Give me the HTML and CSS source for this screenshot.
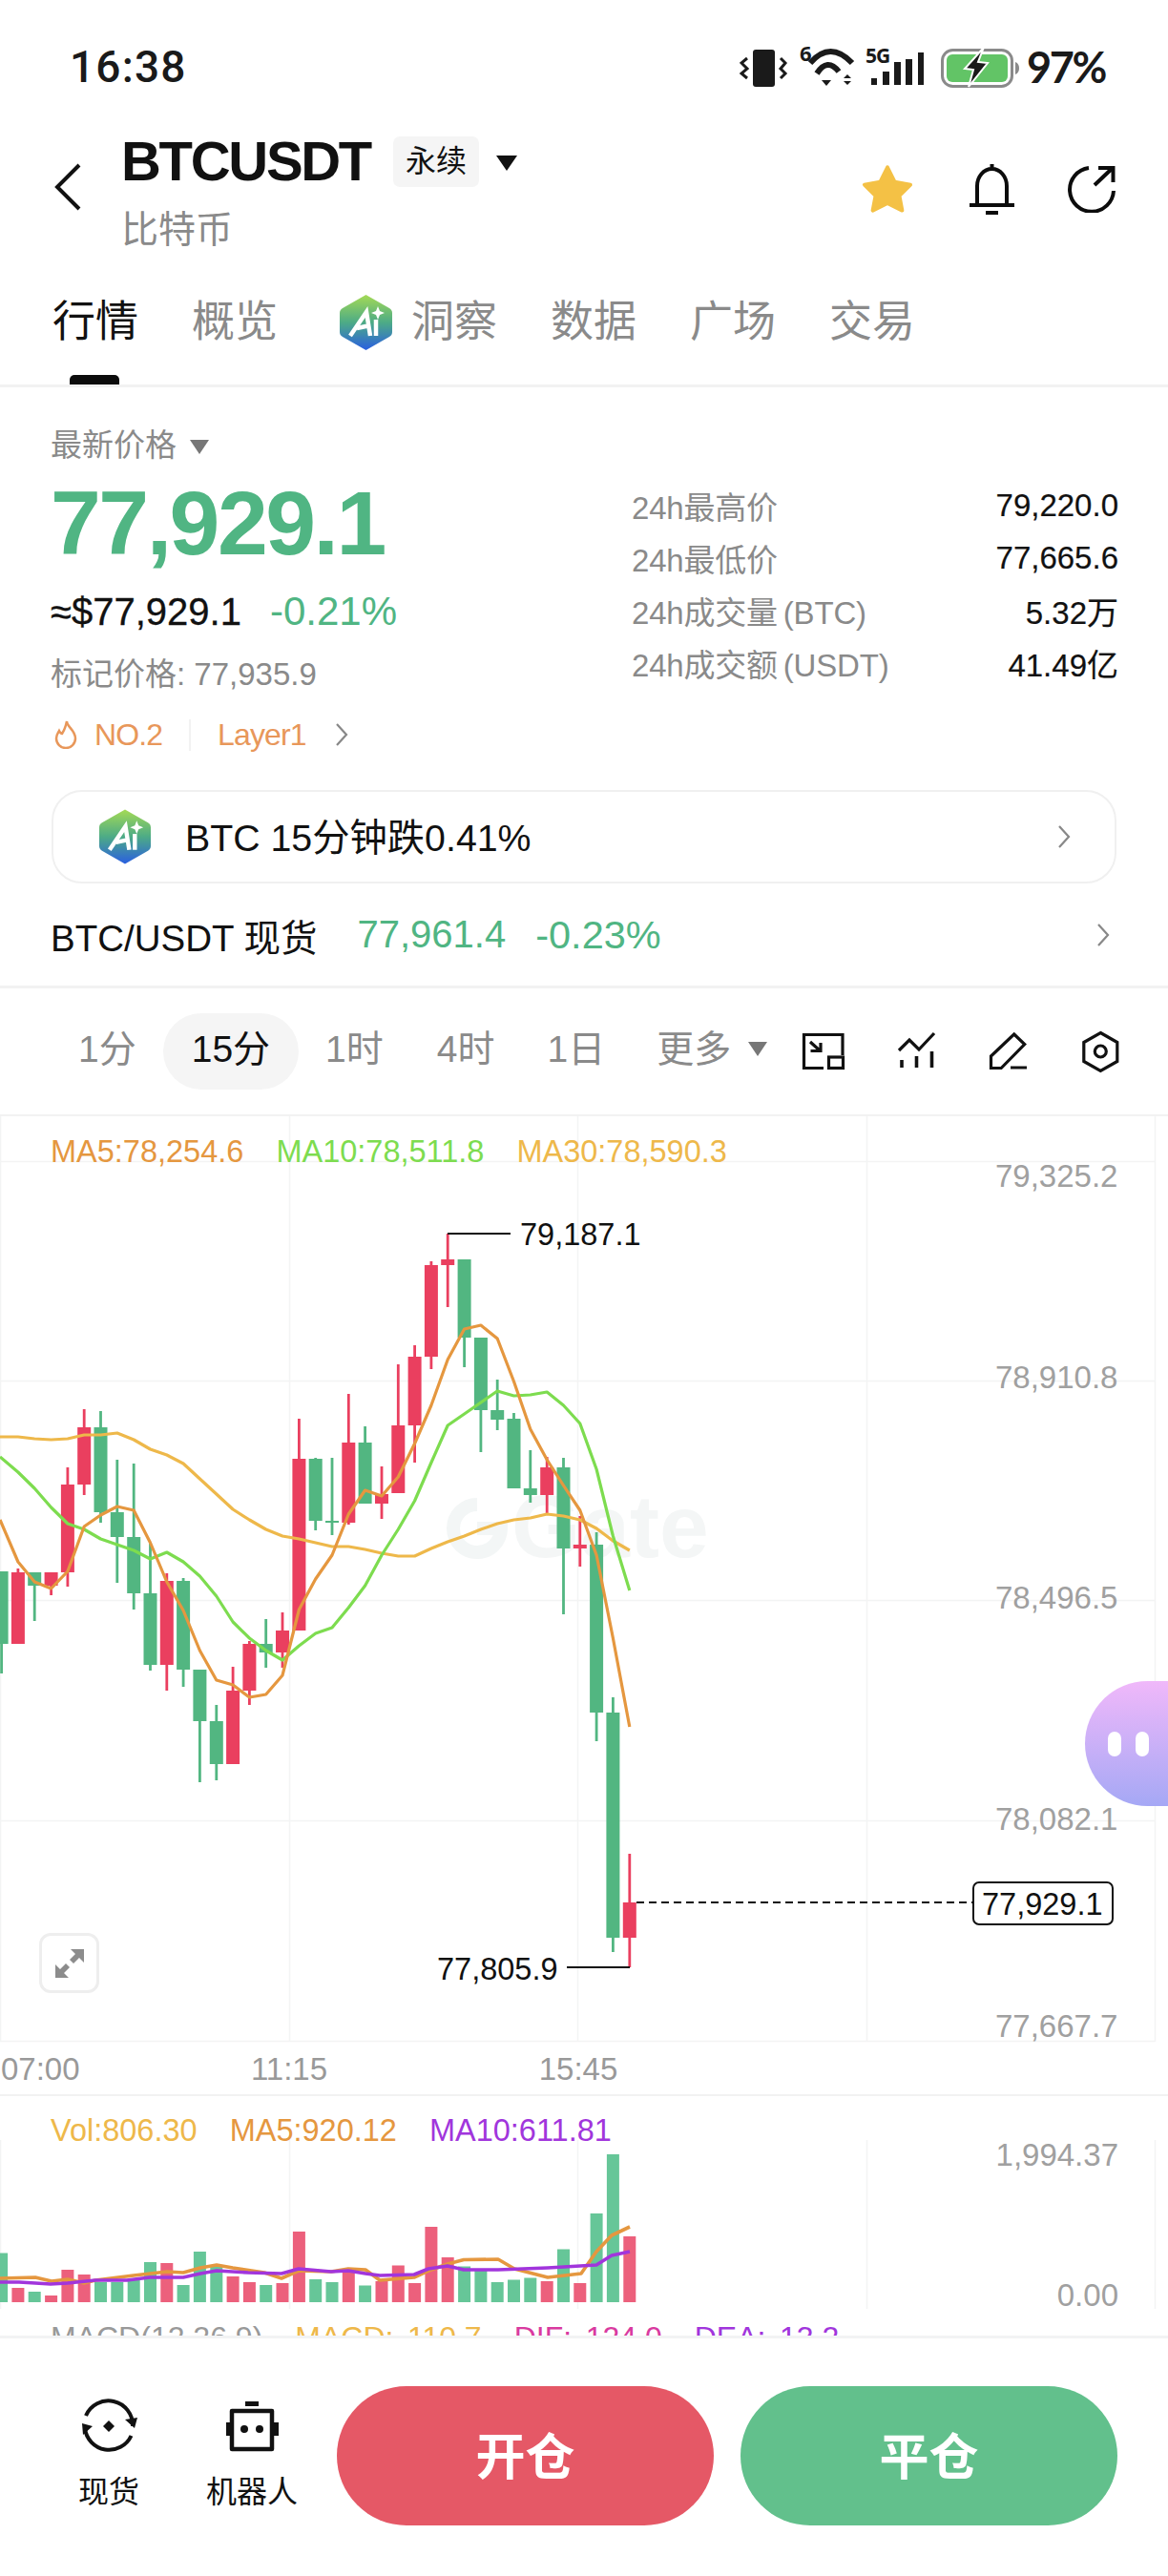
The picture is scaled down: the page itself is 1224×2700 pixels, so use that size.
FILE: index.html
```html
<!DOCTYPE html>
<html lang="zh-CN">
<head>
<meta charset="utf-8">
<title>BTCUSDT</title>
<link rel="stylesheet" href="styles.css">
</head>
<body>
<div class="page">
  <div class="status">
    <span class="clock">16:38</span>
    <div class="status-right">
      <svg class="status-icons" width="296" height="80" viewBox="774 30 296 80">
        <rect x="788" y="52" width="23" height="39" rx="3" fill="#1a1a1a"/>
        <path d="M782 61l-6 5 6 6-6 5 6 5M817 61l5 5-5 6 5 5-5 5" fill="none" stroke="#1a1a1a" stroke-width="3"/>
        <text x="837" y="64" class="st-mini">6</text>
        <path d="M848 66Q869 42 892 66" fill="none" stroke="#1a1a1a" stroke-width="6"/>
        <path d="M855 77Q866 60 878 75" fill="none" stroke="#1a1a1a" stroke-width="6"/>
        <path d="M860 84h10l-5 6z" fill="#1a1a1a"/>
        <path d="M883 82l4-4 4 4zM883 85l4 4 4-4z" fill="#1a1a1a"/>
        <text x="906" y="66" class="st-mini st-5g">5G</text>
        <path d="M912 82h6v7h-6zM924 75h7v14h-7zM936 65h7v24h-7zM948 62h7v27h-7zM961 55h6v34h-6z" fill="#1a1a1a"/>
        <rect x="986.500" y="52.500" width="73" height="38" rx="11" fill="none" stroke="#8a8a8a" stroke-width="3"/>
        <rect x="991" y="57" width="64" height="29" rx="6" fill="#62c466"/>
        <path d="M1063 65c3 1 4 4 4 6.500s-1 5.500-4 6.500z" fill="#8a8a8a"/>
        <path d="M1028 52l-18 20 9 1-5 18 20-25-10-1 5-13z" fill="#1a1a1a" stroke="#fff" stroke-width="2"/>
      </svg>
      <span class="battery-pct">97%</span>
    </div>
  </div>

  <header class="header">
    <svg class="back" width="30" height="52" viewBox="0 0 30 52"><path d="M26 3L3 26l23 23" fill="none" stroke="#111" stroke-width="4"/></svg>
    <div class="title-block">
      <div class="title-row">
        <h1 class="symbol">BTCUSDT</h1>
        <span class="badge">永续</span>
        <span class="tri tri-black"></span>
      </div>
      <div class="subtitle">比特币</div>
    </div>
    <div class="header-actions">
      <svg width="56" height="54" viewBox="901 169 58 55"><path d="M930 173l8 16 17 3-12 12 3 16-16-8-16 8 3-16-12-12 17-3z" fill="#f4c145" stroke="#f4c145" stroke-width="4" stroke-linejoin="round"/></svg>
      <svg class="bell" width="50" height="56" viewBox="1012 168 50 56"><path d="M1036.500 169v5M1021 212v-20a15.500 18 0 0 1 31 0v20M1013 212h47" fill="none" stroke="#0c0c0c" stroke-width="4"/><rect x="1030" y="218" width="13" height="4" fill="#0c0c0c"/></svg>
      <svg class="share" width="50" height="50" viewBox="1119 173 50 50"><path d="M1141 176a23 23 0 1 0 26 24" fill="none" stroke="#0c0c0c" stroke-width="4"/><path d="M1147 194l19-18M1151 176h15.500v15" fill="none" stroke="#0c0c0c" stroke-width="4"/></svg>
    </div>
  </header>

  <nav class="tabs">
    <span class="tab active">行情</span>
    <span class="tab">概览</span>
    <span class="tab tab-ai">
      <svg width="55" height="60" viewBox="0 0 55 60"><defs><linearGradient id="aiA" x1="0" y1="0" x2="0" y2="1"><stop offset="0" stop-color="#a4da55"/><stop offset=".5" stop-color="#4dab86"/><stop offset="1" stop-color="#2a5fe0"/></linearGradient></defs><path d="M27.500 1L52 15c2 1 3 3 3 5v20c0 2-1 4-3 5L27.500 59 3 45c-2-1-3-3-3-5V20c0-2 1-4 3-5z" fill="url(#aiA)"/><path d="M11 44l17-25 4 25M18 36l14-3" fill="none" stroke="#fff" stroke-width="4.500"/><path d="M38 27v17" stroke="#fff" stroke-width="4.500"/><path d="M40 13l2 5 5 2-5 2-2 5-2-5-5-2 5-2z" fill="#fff"/></svg>
      <span>洞察</span>
    </span>
    <span class="tab">数据</span>
    <span class="tab">广场</span>
    <span class="tab">交易</span>
  </nav>

  <section class="summary">
    <div class="summary-left">
      <div class="latest-label">最新价格<span class="tri tri-grey"></span></div>
      <div class="big-price">77,929.1</div>
      <div class="fiat-row"><span class="fiat">≈$77,929.1</span><span class="pct-main">-0.21%</span></div>
      <div class="mark">标记价格: 77,935.9</div>
      <div class="tags">
        <svg width="24" height="30" viewBox="0 0 24 30"><path d="M13 1c0 6 9 9 9 18a10 10 0 0 1-20 0c0-4 2-6 3-8 1 2 2 3 3 3 2-3 4-8 5-13z" fill="none" stroke="#e8975a" stroke-width="2.500"/></svg>
        <span class="tag-text tag-first">NO.2</span>
        <span class="tag-sep"></span>
        <span class="tag-text">Layer1</span>
        <svg class="tag-chev" width="14" height="26" viewBox="0 0 14 26"><path d="M2 2l10 11L2 24" fill="none" stroke="#888" stroke-width="2.200"/></svg>
      </div>
    </div>
    <dl class="stats">
      <div class="stat"><dt>24h最高价</dt><dd>79,220.0</dd></div>
      <div class="stat"><dt>24h最低价</dt><dd>77,665.6</dd></div>
      <div class="stat"><dt>24h成交量 (BTC)</dt><dd>5.32万</dd></div>
      <div class="stat"><dt>24h成交额 (USDT)</dt><dd>41.49亿</dd></div>
    </dl>
  </section>

  <div class="ai-card">
    <svg width="54" height="60" viewBox="0 0 55 60"><defs><linearGradient id="aiB" x1="0" y1="0" x2="0" y2="1"><stop offset="0" stop-color="#a4da55"/><stop offset=".5" stop-color="#4dab86"/><stop offset="1" stop-color="#2a5fe0"/></linearGradient></defs><path d="M27.500 1L52 15c2 1 3 3 3 5v20c0 2-1 4-3 5L27.500 59 3 45c-2-1-3-3-3-5V20c0-2 1-4 3-5z" fill="url(#aiB)"/><path d="M11 44l17-25 4 25M18 36l14-3" fill="none" stroke="#fff" stroke-width="4.500"/><path d="M38 27v17" stroke="#fff" stroke-width="4.500"/><path d="M40 13l2 5 5 2-5 2-2 5-2-5-5-2 5-2z" fill="#fff"/></svg>
    <span class="ai-text">BTC 15分钟跌0.41%</span>
    <svg class="chev-end" width="14" height="26" viewBox="0 0 14 26"><path d="M2 2l10 11L2 24" fill="none" stroke="#888" stroke-width="2.200"/></svg>
  </div>

  <div class="spot-row">
    <span class="spot-name">BTC/USDT 现货</span>
    <span class="spot-price">77,961.4</span>
    <span class="spot-pct">-0.23%</span>
    <svg class="chev-end" width="14" height="26" viewBox="0 0 14 26"><path d="M2 2l10 11L2 24" fill="none" stroke="#888" stroke-width="2.200"/></svg>
  </div>

  <div class="timeframes">
    <span class="tf">1分</span>
    <span class="tf tf-active">15分</span>
    <span class="tf">1时</span>
    <span class="tf">4时</span>
    <span class="tf tf-day">1日</span>
    <span class="tf tf-more">更多<span class="tri tri-grey tri-more"></span></span>
    <div class="tools">
      <svg width="48" height="44" viewBox="840 1080 48 44"><path d="M864 1119.500h-20.500V1084.500H884V1106M850 1092l10 9M850.500 1101.500H861V1093" fill="none" stroke="#111" stroke-width="3.200"/><rect x="869.500" y="1108" width="15" height="11.500" fill="none" stroke="#111" stroke-width="3.200"/></svg>
      <svg width="44" height="44" viewBox="938 1080 44 44"><path d="M941 1101l11-11 10 10 16-17" fill="none" stroke="#111" stroke-width="3.200"/><path d="M944 1111v8M959.500 1107v12M975.500 1102v17" stroke="#111" stroke-width="3.600"/></svg>
      <svg width="44" height="44" viewBox="1034 1079 44 44"><path d="M1061.700 1083l11 10.500-24.500 25h-10.700V1106zM1058 1118h17" fill="none" stroke="#111" stroke-width="3.200"/></svg>
      <svg width="44" height="46" viewBox="1129 1079 44 46"><path d="M1151.300 1082.500l17.500 10v20l-17.500 10-17.500-10v-20z" fill="none" stroke="#111" stroke-width="3.200"/><circle cx="1151.300" cy="1102" r="6" fill="none" stroke="#111" stroke-width="3.200"/></svg>
    </div>
  </div>

  <section class="chart">
    <svg class="canvas" width="1224" height="1027" viewBox="0 1168 1224 1027">
      <g class="grid">
        <path d="M0 1217.500H1210M0 1447.500H1210M0 1677.500H1210M0 1908.500H1210M0 2139.500H1210"/>
        <path d="M.5 1170V2140M303.500 1170V2140M605.500 1170V2140M908.500 1170V2140M1210.500 1170V2140"/>
      </g>
      <g class="watermark">
        <path d="M500 1577a25 25 0 1 0 25 25h-25" fill="none" stroke="#f3f6f6" stroke-width="14"/>
        <text x="536" y="1632" class="wm-text">Gate</text>
      </g>
      <path class="wick up" d="M1.600 1647V1754M36.200 1648V1699M105.500 1479V1596M122.800 1530V1659M140.200 1534V1687M157.500 1618V1751M192.100 1654V1768M209.400 1750V1868M226.800 1787V1866M278.700 1697V1748M330.700 1528V1604M348 1528V1609M382.600 1495V1576M486.600 1320V1433M503.900 1402V1522M521.200 1446V1499M538.500 1481V1560M555.800 1520V1575M590.500 1528V1692M625.100 1606V1825M642.400 1779V2046"/>
      <path class="wick down" d="M18.900 1644V1723M53.600 1648V1672M70.900 1538V1663M88.200 1477V1567M174.800 1649V1772M244.100 1747V1849M261.400 1720V1787M296 1690V1748M313.400 1487V1709M365.300 1461V1598M400 1537V1592M417.300 1430V1565M434.600 1410V1533M451.900 1322V1435M469.200 1293V1370M573.200 1527V1587M607.800 1589V1642M659.800 1943V2062"/>
      <path class="body up" d="M1.600 1647V1723M36.200 1648V1662M105.500 1496V1585M122.800 1585V1611M140.200 1611V1670M157.500 1670V1745M192.100 1657V1750M209.400 1750V1804M226.800 1804V1849M278.700 1723V1732M330.700 1529V1594M348 1594V1596M382.600 1512V1576M486.600 1320V1402M503.900 1402V1478M521.200 1478V1488M538.500 1487V1560M555.800 1560V1567M590.500 1538V1623M625.100 1619V1795M642.400 1795V2031"/>
      <path class="body down" d="M18.900 1648V1723M53.600 1648V1662M70.900 1556V1648M88.200 1496V1556M174.800 1657V1745M244.100 1772V1849M261.400 1723V1772M296 1709V1732M313.400 1529V1709M365.300 1512V1596M400 1566V1576M417.300 1494V1565M434.600 1422V1494M451.900 1326V1422M469.200 1320V1326M573.200 1538V1567M607.800 1619V1623M659.800 1994V2031"/>
      <polyline class="ma ma30" points="0,1506 18.900,1506 36.200,1508 53.600,1509 70.900,1508 88.200,1504 105.500,1504 122.800,1502 140.200,1509 157.500,1519 174.800,1525 192.100,1534 209.400,1550 226.800,1566 244.100,1582 261.400,1593 278.700,1603 296,1610 313.400,1613 330.700,1617 348,1621 365.300,1621 382.600,1624 400,1628 417.300,1631 434.600,1631 451.900,1623 469.200,1616 486.600,1610 503.900,1603 521.200,1597 538.500,1593 555.800,1591 573.200,1587 590.500,1589 607.800,1593 625.100,1602 642.400,1615 659.800,1625"/>
      <polyline class="ma ma10" points="0,1527 18.900,1543 36.200,1560 53.600,1580 70.900,1597 88.200,1603 105.500,1613 122.800,1619 140.200,1625 157.500,1634 174.800,1627 192.100,1637 209.400,1652 226.800,1673 244.100,1700 261.400,1717 278.700,1730 296,1740 313.400,1725 330.700,1712 348,1706 365.300,1685 382.600,1662 400,1630 417.300,1603 434.600,1573 451.900,1533 469.200,1494 486.600,1482 503.900,1470 521.200,1458 538.500,1463 555.800,1462 573.200,1459 590.500,1473 607.800,1492 625.100,1540 642.400,1610 659.800,1667"/>
      <polyline class="ma ma5" points="0,1593 18.900,1637 36.200,1658 53.600,1665 70.900,1647 88.200,1600 105.500,1588 122.800,1579 140.200,1583 157.500,1617 174.800,1658 192.100,1688 209.400,1730 226.800,1761 244.100,1766 261.400,1779 278.700,1776 296,1756 313.400,1687 330.700,1655 348,1630 365.300,1587 382.600,1562 400,1568 417.300,1548 434.600,1513 451.900,1473 469.200,1425 486.600,1393 503.900,1389 521.200,1403 538.500,1448 555.800,1498 573.200,1530 590.500,1557 607.800,1583 625.100,1630 642.400,1717 659.800,1810"/>
      <path class="marker" d="M469 1293H535M660 2062H594"/>
      <text class="t-dark" x="545" y="1305">79,187.1</text>
      <text class="t-dark" x="458" y="2075">77,805.9</text>
      <path class="dash" d="M667 1994H1019"/>
      <rect class="price-box" x="1020" y="1973" width="146" height="44" rx="6"/>
      <text class="t-dark" x="1029" y="2007">77,929.1</text>
      <text class="t-axis" x="1043" y="1244">79,325.2</text>
      <text class="t-axis" x="1043" y="1455">78,910.8</text>
      <text class="t-axis" x="1043" y="1686">78,496.5</text>
      <text class="t-axis" x="1043" y="1918">78,082.1</text>
      <text class="t-axis" x="1043" y="2135">77,667.7</text>
      <text class="t-axis t-time" x="1" y="2180">07:00</text>
      <text class="t-axis t-time t-mid" x="303" y="2180">11:15</text>
      <text class="t-axis t-time t-mid" x="606" y="2180">15:45</text>
    </svg>
    <div class="legend legend-main">
      <span class="c-ma5">MA5:78,254.6</span>
      <span class="c-ma10">MA10:78,511.8</span>
      <span class="c-ma30">MA30:78,590.3</span>
    </div>
    <div class="expand">
      <svg width="34" height="34" viewBox="0 0 34 34"><path d="M32 2v14l-5-5-6 6-4-4 6-6-5-5zM2 32V18l5 5 6-6 4 4-6 6 5 5z" fill="#8c8c8c"/></svg>
    </div>
  </section>

  <section class="vol">
    <svg class="canvas" width="1224" height="253" viewBox="0 2195 1224 253">
      <path class="grid-v" d="M.5 2243V2420M303.500 2243V2420M605.500 2243V2420M908.500 2243V2420M1210.500 2243V2420"/>
      <path class="bar up" d="M1.600 2413V2361.500M36.200 2413V2402M105.500 2413V2392M122.800 2413V2392M140.200 2413V2389M157.500 2413V2371M192.100 2413V2395M209.400 2413V2360M226.800 2413V2376M278.700 2413V2395M330.700 2413V2389M348 2413V2392M382.600 2413V2395.500M486.600 2413V2375.500M503.900 2413V2378M521.200 2413V2392M538.500 2413V2389.500M555.800 2413V2387.500M590.500 2413V2357.600M625.100 2413V2320M642.400 2413V2258"/>
      <path class="bar down" d="M18.900 2413V2398M53.600 2413V2406M70.900 2413V2379M88.200 2413V2384M174.800 2413V2372M244.100 2413V2386M261.400 2413V2392M296 2413V2393M313.400 2413V2339M365.300 2413V2381.500M400 2413V2391M417.300 2413V2374.500M434.600 2413V2393M451.900 2413V2334M469.200 2413V2366M573.200 2413V2391M607.800 2413V2393M659.800 2413V2344"/>
      <polyline class="vma vma5" points="0,2388 37,2387 54,2391 71,2389 88,2393 100,2390 140,2385 175,2381 192,2382 210,2377 227,2374 244,2377 277,2382 295,2388 313,2380 347,2381 365,2378 383,2379 398,2390 434,2387 449,2380 469,2373 486,2368.500 522,2368 539,2378 574,2387 609,2383 625,2360 641,2343 660,2334"/>
      <polyline class="vma vma10" points="0,2392 20,2392 37,2393 53,2394 71,2393 100,2390 133,2390 157,2387 192,2387 210,2383 227,2380 260,2382 295,2383 313,2378 347,2381 365,2380 383,2383 398,2385 434,2384 449,2378 469,2375 486,2379 522,2379 574,2377 625,2374 641,2364 660,2360"/>
      <text class="t-axis" x="1172" y="2270" text-anchor="end">1,994.37</text>
      <text class="t-axis" x="1172" y="2417" text-anchor="end">0.00</text>
    </svg>
    <div class="legend legend-vol">
      <span class="c-ma30">Vol:806.30</span>
      <span class="c-ma5">MA5:920.12</span>
      <span class="c-purple">MA10:611.81</span>
    </div>
    <div class="legend legend-macd">
      <span class="c-grey">MACD(12,26,9)</span>
      <span class="c-ma30">MACD: -110.7</span>
      <span class="c-pink">DIF: -124.0</span>
      <span class="c-purple">DEA: -13.2</span>
    </div>
  </section>

  <footer class="footer">
    <div class="foot-nav">
      <div class="foot-item">
        <svg width="60" height="60" viewBox="84 2513 60 60"><path d="M90 2532a25.500 25.500 0 0 1 49 11M89 2545a25.500 25.500 0 0 0 48.500 8" fill="none" stroke="#111" stroke-width="4"/><path d="M131 2536l10 9 3-11zM87 2552l10-9-11-3z" fill="#111"/><path d="M114 2537l6 6-6 6-6-6z" fill="#111"/></svg>
        <span>现货</span>
      </div>
      <div class="foot-item">
        <svg width="60" height="60" viewBox="234 2513 60 60"><rect x="243" y="2527" width="42" height="40" fill="none" stroke="#111" stroke-width="4.500" stroke-linejoin="round"/><path d="M257 2517h14v5h-14zM237 2539h4v14h-4zM287 2539h5v14h-5z" fill="#111"/><circle cx="256" cy="2546" r="4" fill="#111"/><circle cx="272" cy="2546" r="4" fill="#111"/></svg>
        <span>机器人</span>
      </div>
    </div>
    <button class="trade trade-open">开仓</button>
    <button class="trade trade-close">平仓</button>
  </footer>

  <div class="pet"><span class="pet-eye"></span><span class="pet-eye"></span></div>
</div>
</body>
</html>
```
FILE: styles.css
```css
* { box-sizing: border-box; margin: 0; padding: 0; }
html, body { background: #fff; }
body { font-family: "Liberation Sans", "Noto Sans CJK SC", sans-serif; color: #111; }
.page { position: relative; width: 1224px; height: 2700px; overflow: hidden; background: #fff; display: flex; flex-direction: column; }

.status { flex: none; height: 120px; padding: 20px 0 0 73px; display: flex; align-items: center; }
.clock { font-family: "Roboto", sans-serif; font-size: 46px; font-weight: 500; letter-spacing: 1.2px; color: #1a1a1a; }
.status-right { margin-left: auto; padding-right: 66px; display: flex; align-items: center; }
.status-icons { display: block; }
.st-mini { font-family: "Open Sans", sans-serif; font-weight: 700; font-size: 22px; fill: #1a1a1a; }
.st-5g { font-size: 21px; letter-spacing: -1px; }
.battery-pct { font-family: "Lato", sans-serif; font-weight: 700; font-size: 45px; color: #1a1a1a; margin-left: 5px; letter-spacing: -2.4px; }

.header { flex: none; height: 170px; display: flex; align-items: flex-start; padding-top: 20px; }
.back { margin: 30px 0 0 57px; flex: none; }
.title-block { margin-left: 40px; }
.title-row { display: flex; align-items: center; height: 58px; }
.symbol { font-size: 58px; font-weight: 700; line-height: 58px; letter-spacing: -2.300px; color: #111; }
.badge { margin-left: 24px; width: 90px; height: 53px; line-height: 53px; text-align: center; font-size: 32px; background: #f5f5f5; border-radius: 7px; color: #111; }
.tri { display: inline-block; width: 0; height: 0; border-left: 10px solid transparent; border-right: 10px solid transparent; border-top: 15px solid #777; }
.tri-black { border-left-width: 11px; border-right-width: 11px; border-top-width: 16px; border-top-color: #111; margin: 4px 0 0 18px; }
.tri-grey { margin-left: 14px; vertical-align: 2px; }
.subtitle { margin-top: 22px; font-size: 39px; line-height: 42px; color: #8a8a8a; }
.header-actions { margin-left: auto; padding: 28px 55px 0 0; display: flex; align-items: center; }
.bell { margin: 3px 0 0 57px; }
.share { margin-left: 54px; }

.tabs { flex: none; height: 116px; border-bottom: 3px solid #f2f2f2; display: flex; align-items: flex-start; padding: 0 0 0 55px; gap: 56px; }
.tab { position: relative; font-size: 45px; line-height: 60px; margin-top: 18px; color: #8a8a8a; display: flex; align-items: center; gap: 20px; }
.tab.active { color: #111; }
.tab.active::after { content: ""; position: absolute; left: 18px; width: 52px; top: 85px; height: 10px; background: #0c0c0c; border-radius: 5px 5px 0 0; }
.tab-ai { margin-left: 9px; }

.summary { flex: none; display: flex; height: 384px; }
.summary-left { width: 662px; padding: 41px 0 0 53px; }
.latest-label { font-size: 33px; line-height: 40px; color: #8a8a8a; }
.big-price { margin-top: 16px; font-size: 95px; line-height: 90px; font-weight: 700; letter-spacing: -2.500px; color: #50b583; }
.fiat-row { margin-top: 23px; line-height: 50px; display: flex; align-items: baseline; gap: 30px; }
.fiat { font-size: 40px; color: #111; -webkit-text-stroke: 0.3px #111; }
.pct-main { font-size: 42px; color: #50b583; }
.mark { margin-top: 21px; font-size: 33px; line-height: 40px; color: #8a8a8a; }
.tags { margin-top: 23px; height: 40px; display: flex; align-items: center; padding-left: 4px; }
.tag-text { font-size: 32px; color: #e8975a; letter-spacing: -0.9px; }
.tag-first { margin-left: 18px; }
.tag-sep { width: 2px; height: 33px; background: #f2f2f2; margin: 0 28px; }
.tag-chev { margin-left: 30px; }
.stats { width: 510px; padding-top: 96px; }
.stat { height: 55px; display: flex; justify-content: space-between; align-items: center; font-size: 33px; }
.stat dt { color: #8a8a8a; letter-spacing: -0.2px; word-spacing: -3px; }
.stat dd { color: #111; -webkit-text-stroke: 0.2px #111; }

.ai-card { flex: none; height: 98px; margin: 38px 54px 0 54px; border: 2px solid #f0f0f0; border-radius: 32px; display: flex; align-items: center; padding: 0 46px 0 48px; }
.ai-text { margin: 0 0 5px 36px; font-size: 39.300px; }
.chev-end { margin-left: auto; flex: none; }
.spot-row { flex: none; height: 110px; border-bottom: 3px solid #f2f2f2; display: flex; align-items: center; padding: 0 61px 0 53px; font-size: 38.500px; }
.spot-price { margin-left: 42px; font-size: 40px; color: #50b583; }
.spot-pct { margin-left: 31px; font-size: 41.500px; color: #50b583; }

.timeframes { flex: none; height: 132px; display: flex; align-items: center; padding: 0 49px 0 54px; font-size: 39px; color: #8a8a8a; }
.tf { height: 80px; line-height: 76px; padding: 0 28px; white-space: nowrap; }
.tf-active { padding: 0 30px; color: #111; background: #f5f5f5; border-radius: 40px; }
.tf-day { margin-left: -1px; }
.tf-more { padding: 0 0 0 26px; }
.tri-more { margin-left: 18px; vertical-align: 6px; }
.tools { margin-left: auto; display: flex; align-items: center; gap: 52px; }

.chart { flex: none; position: relative; height: 1027px; border-top: 2px solid #f2f2f2; }
.chart .canvas { position: absolute; left: 0; top: -2px; }
.canvas { display: block; }
.grid path, .grid-v { fill: none; stroke: #f3f4f4; stroke-width: 1.500; }
.wm-text { font-size: 93px; font-weight: 700; fill: #f4f6f6; }
.wick { fill: none; stroke-width: 2.800; }
.body { fill: none; stroke-width: 14; }
.up { stroke: #52b681; }
.down { stroke: #ea3f5f; }
.ma { fill: none; stroke-width: 3.200; stroke-linejoin: round; }
.ma5 { stroke: #e5973f; }
.ma10 { stroke: #7ddc4f; }
.ma30 { stroke: #eeb84a; }
.marker { fill: none; stroke: #111; stroke-width: 2; }
.dash { fill: none; stroke: #111; stroke-width: 2; stroke-dasharray: 8 5; }
.price-box { fill: #fff; stroke: #111; stroke-width: 2; }
.t-dark { font-size: 32.500px; fill: #111; }
.t-axis { font-size: 33px; fill: #a0a0a0; }
.t-time { fill: #999; }
.t-mid { text-anchor: middle; }

.legend { position: absolute; left: 53px; height: 40px; line-height: 40px; font-size: 32.500px; display: flex; white-space: nowrap; }
.legend-main { top: 17px; gap: 34px; }
.legend-vol { top: 16px; gap: 34px; }
.legend-macd { top: 233px; gap: 34px; font-size: 32px; word-spacing: -5px; }
.c-ma5 { color: #e5973f; }
.c-ma10 { color: #7ddc4f; }
.c-ma30 { color: #eeb84a; }
.c-purple { color: #a135dc; }
.c-pink { color: #d93aa0; }
.c-grey { color: #999; }
.expand { position: absolute; left: 41px; top: 856px; width: 63px; height: 63px; border: 3px solid #eeeeee; border-radius: 12px; display: flex; align-items: center; justify-content: center; background: #fff; }

.vol { flex: none; position: relative; height: 253px; overflow: hidden; border-top: 2px solid #f2f2f2; }
.vol .canvas { position: absolute; left: 0; top: -2px; }
.bar { fill: none; stroke-width: 13; }
.bar.up { stroke: #66c698; }
.bar.down { stroke: #ec607c; }
.vma { fill: none; stroke-width: 3.600; stroke-linejoin: round; }
.vma5 { stroke: #e5973f; }
.vma10 { stroke: #a135dc; }

.footer { flex: 1; border-top: 3px solid #f2f3f4; display: flex; align-items: flex-start; padding: 50px 0 0 82px; background: #fff; }
.foot-nav { display: flex; gap: 70px; margin-top: 12px; }
.foot-item { display: flex; flex-direction: column; align-items: center; font-size: 32px; line-height: 40px; color: #111; white-space: nowrap; }
.foot-item svg { margin-bottom: 19px; }
.trade { width: 395px; height: 146px; padding-bottom: 6px; border: 0; border-radius: 73px; color: #fff; font-family: inherit; font-size: 52px; font-weight: 700; }
.trade-open { margin-left: 41px; background: #e55866; }
.trade-close { margin-left: 28px; background: #62c08c; }

.pet { position: absolute; left: 1137px; top: 1762px; width: 87px; height: 131px; border-radius: 66px 0 0 66px; background: linear-gradient(#f0b8fa, #a5a8f5); display: flex; gap: 15px; align-items: center; padding-left: 24px; }
.pet-eye { width: 14px; height: 26px; border-radius: 7px; background: #fff; }
```
